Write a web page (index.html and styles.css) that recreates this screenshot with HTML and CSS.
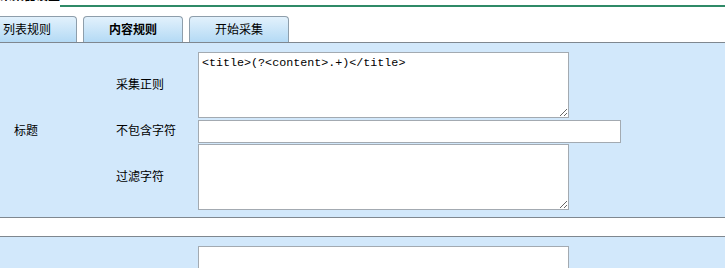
FILE: index.html
```html
<!DOCTYPE html>
<html lang="zh-CN">
<head>
    <meta charset="UTF-8">
    <meta name="viewport" content="width=device-width, initial-scale=1.0">
    <title>采集器设置</title>
    <link rel="stylesheet" href="styles.css">
</head>
<body>
    <!-- title -->
    <div class="title-bar">
        <h3 class="title-text">采集器设置</h3>
        <span class="title-line"></span>
    </div>

    <!-- tabs -->
    <ul class="tab-list">
        <li class="tab-item">列表规则</li>
        <li class="tab-item active">内容规则</li>
        <li class="tab-item">开始采集</li>
    </ul>

    <!-- 标题 -->
    <div class="rule-panel">
        <div class="rule-name">标题</div>
        <div class="rule-fields">
            <div class="field-row">
                <label class="field-label">采集正则</label>
                <textarea class="field-area">&lt;title&gt;(?&lt;content&gt;.+)&lt;/title&gt;</textarea>
            </div>
            <div class="field-row tight">
                <label class="field-label">不包含字符</label>
                <input type="text" class="field-input">
            </div>
            <div class="field-row">
                <label class="field-label">过滤字符</label>
                <textarea class="field-area"></textarea>
            </div>
        </div>
    </div>

    <div class="rule-sep"></div>

    <!-- next rule -->
    <div class="rule-panel">
        <div class="rule-name"></div>
        <div class="rule-fields">
            <div class="field-row">
                <label class="field-label"></label>
                <textarea class="field-area"></textarea>
            </div>
        </div>
    </div>
</body>
</html>
```

FILE: styles.css
```css
/*global*/
* {
    margin: 0;
    padding: 0;
    box-sizing: border-box;
}

body {
    font-family: "Noto Sans CJK SC", "DejaVu Sans", sans-serif;
    font-size: 12px;
    color: #000;
    background-color: #fff;
    overflow: hidden;
}

/*title*/
.title-bar {
    display: flex;
    height: 16px;
}

.title-text {
    font-size: 12px;
    line-height: 12px;
    margin-top: -11px;
    width: 60px;
    white-space: nowrap;
    overflow: hidden;
}

.title-line {
    flex: 1;
    height: 2px;
    margin-top: 5px;
    background-color: #2f8a67;
}

/*tabs*/
.tab-list {
    list-style: none;
    display: flex;
    gap: 6px;
    margin-left: -23px;
    border-bottom: 1px solid #7f878f;
}

.tab-item {
    width: 100px;
    height: 26px;
    line-height: 24px;
    text-align: center;
    border: 1px solid #8e9eab;
    border-bottom: none;
    border-radius: 4px 4px 0 0;
    background: linear-gradient(#e2f1fc, #b4daf5);
}

.tab-item.active {
    font-weight: bold;
}

/*panel*/
.rule-panel {
    display: flex;
    background-color: #d2e8fb;
    padding: 9px 0 7px;
    border-bottom: 1px solid #7f878f;
}

.rule-name {
    width: 116px;
    padding-left: 14px;
    padding-bottom: 3px;
    display: flex;
    align-items: center;
}

.rule-fields {
    display: flex;
    flex-direction: column;
    gap: 2px;
}

.field-row {
    display: flex;
    align-items: center;
}

.field-row.tight {
    margin-bottom: -1px;
}

.field-label {
    width: 82px;
    line-height: 12px;
    padding-bottom: 3px;
}

.field-area {
    width: 371px;
    height: 66px;
    padding: 3px 3px;
    border: 1px solid #a3aab1;
    font-family: "Liberation Mono", monospace;
    font-size: 11.7px;
    line-height: 15px;
    color: #000;
    background-color: #fff;
}

.field-input {
    width: 423px;
    height: 23px;
    border: 1px solid #a3aab1;
    background-color: #fff;
}

.rule-sep {
    height: 19px;
    border-bottom: 1px solid #7f878f;
}
```
